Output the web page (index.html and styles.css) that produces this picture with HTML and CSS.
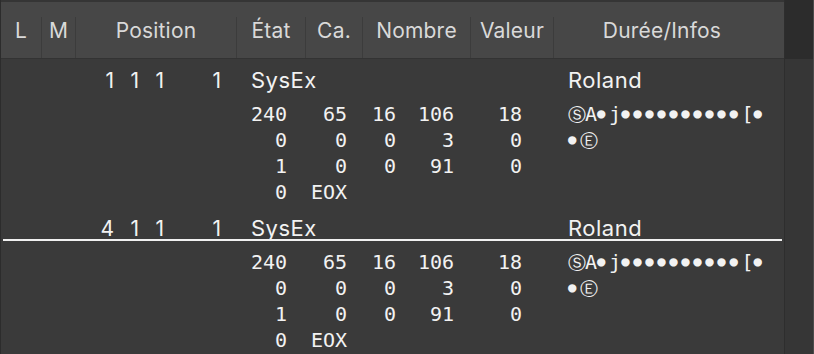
FILE: index.html
```html
<!DOCTYPE html>
<html lang="fr">
<head>
    <meta charset="UTF-8">
    <title>Liste des événements</title>
    <link rel="stylesheet" href="styles.css">
</head>
<body>
    <div class="window">
        <div class="list">
            <div class="head">
                <div class="hcell">L</div>
                <div class="hcell">M</div>
                <div class="hcell">Position</div>
                <div class="hcell">État</div>
                <div class="hcell">Ca.</div>
                <div class="hcell">Nombre</div>
                <div class="hcell">Valeur</div>
                <div class="hcell last">Durée/Infos</div>
            </div>

            <div class="event">
                <div class="main">
                    <div class="pos">
                        <span class="bar">1</span><span class="bar">1</span><span class="bar">1</span><span class="tick">1</span>
                    </div>
                    <div class="status">SysEx</div>
                    <div class="info">Roland</div>
                </div>
                <div class="data">
                    <span class="n">240</span><span class="n">65</span><span class="n">16</span><span class="n">106</span><span class="n">18</span><span class="txt"><span class="ctl">Ⓢ</span>A<span class="dots">●</span>j<span class="dots">●●●●●●●●●●</span>[<span class="dots">●</span></span>
                    <span class="n">0</span><span class="n">0</span><span class="n">0</span><span class="n">3</span><span class="n">0</span><span class="txt"><span class="dots">●</span><span class="ctl">Ⓔ</span></span>
                    <span class="n">1</span><span class="n">0</span><span class="n">0</span><span class="n">91</span><span class="n">0</span><span class="txt"></span>
                    <span class="n">0</span><span class="n">EOX</span><span class="n"></span><span class="n"></span><span class="n"></span><span class="txt"></span>
                </div>
            </div>

            <div class="event current">
                <div class="main">
                    <div class="pos">
                        <span class="bar">4</span><span class="bar">1</span><span class="bar">1</span><span class="tick">1</span>
                    </div>
                    <div class="status">SysEx</div>
                    <div class="info">Roland</div>
                </div>
                <div class="playhead"></div>
                <div class="data">
                    <span class="n">240</span><span class="n">65</span><span class="n">16</span><span class="n">106</span><span class="n">18</span><span class="txt"><span class="ctl">Ⓢ</span>A<span class="dots">●</span>j<span class="dots">●●●●●●●●●●</span>[<span class="dots">●</span></span>
                    <span class="n">0</span><span class="n">0</span><span class="n">0</span><span class="n">3</span><span class="n">0</span><span class="txt"><span class="dots">●</span><span class="ctl">Ⓔ</span></span>
                    <span class="n">1</span><span class="n">0</span><span class="n">0</span><span class="n">91</span><span class="n">0</span><span class="txt"></span>
                    <span class="n">0</span><span class="n">EOX</span><span class="n"></span><span class="n"></span><span class="n"></span><span class="txt"></span>
                </div>
            </div>
        </div>
        <div class="scroll">
            <div class="scroll-head"></div>
        </div>
    </div>
</body>
</html>
```

FILE: styles.css
```css
html, body {
    margin: 0;
    padding: 0;
    background-color: #3a3a3a;
}
body {
    width: 814px;
    height: 354px;
    overflow: hidden;
    font-family: Inter, "Liberation Sans", sans-serif;
}
.window {
    display: flex;
    height: 354px;
}
.list {
    width: 783px;
    border-left: 1px solid #2c2c2c;
    background-color: #3a3a3a;
}
.head {
    display: grid;
    grid-template-columns: 41px 34px 161px 69px 57px 108px 83px 230px;
    height: 56px;
    border-top: 2px solid #353535;
    border-bottom: 1px solid #333333;
    background-color: #474747;
}
.hcell {
    display: flex;
    align-items: center;
    justify-content: center;
    margin-top: 15px;
    padding-bottom: 15px;
    border-right: 1px solid #3c3c3c;
    color: #d9d9d9;
    font-size: 21px;
    letter-spacing: 0.2px;
}
.hcell.last {
    border-right: none;
    padding-right: 14px;
}
.event {
    position: relative;
    height: 148px;
    color: #f2f2f2;
}
.main {
    display: grid;
    grid-template-columns: 236px 69px 57px 108px 83px 230px;
    height: 42px;
    align-items: center;
    font-size: 22px;
}
.pos {
    display: flex;
    justify-content: flex-end;
    padding-right: 16px;
    font-size: 21px;
}
.bar {
    width: 25px;
    text-align: right;
}
.tick {
    width: 57px;
    text-align: right;
}
.status {
    grid-column: 2 / 6;
    padding-left: 14px;
    letter-spacing: 0.5px;
}
.info {
    grid-column: 6;
    padding-left: 14px;
    letter-spacing: 0.5px;
}
.data {
    display: grid;
    grid-template-columns: 50px 60px 49px 58px 68px 1fr;
    grid-auto-rows: 26px;
    align-items: center;
    padding-left: 236px;
    font-family: "DejaVu Sans Mono", "Liberation Mono", monospace;
    font-size: 20px;
}
.n {
    text-align: right;
}
.txt {
    padding-left: 46px;
    white-space: nowrap;
}
.ctl {
    display: inline-block;
    width: 17px;
    font-family: "DejaVu Sans", sans-serif;
    font-size: 18px;
    line-height: 0;
}
.dots {
    font-size: 14px;
    letter-spacing: 3.6px;
    line-height: 0;
    vertical-align: 3px;
}
.playhead {
    position: absolute;
    left: 2px;
    right: 2px;
    top: 32px;
    height: 2px;
    background-color: #f0f0f0;
}
.scroll {
    width: 28px;
    border-left: 1px solid #2e2e2e;
    border-right: 1px solid #4c4c4c;
    background-color: #363636;
}
.scroll-head {
    height: 59px;
    background-color: #2c2c2c;
}
```
